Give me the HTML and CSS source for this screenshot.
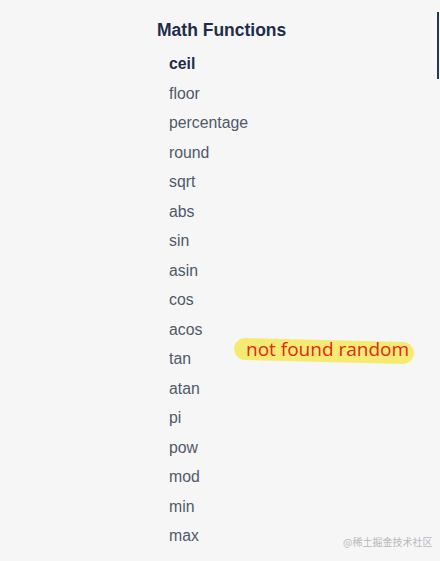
FILE: index.html
```html
<!DOCTYPE html>
<html>
<head>
<meta charset="utf-8">
<link rel="stylesheet" href="styles.css">
</head>
<body>
<div class="page">
  <div class="edge"></div>
  <nav class="sidebar">
    <h2 class="title">Math Functions</h2>
    <ul class="list">
      <li class="item active">ceil</li>
      <li class="item">floor</li>
      <li class="item">percentage</li>
      <li class="item">round</li>
      <li class="item">sqrt</li>
      <li class="item">abs</li>
      <li class="item">sin</li>
      <li class="item">asin</li>
      <li class="item">cos</li>
      <li class="item">acos</li>
      <li class="item">tan</li>
      <li class="item">atan</li>
      <li class="item">pi</li>
      <li class="item">pow</li>
      <li class="item">mod</li>
      <li class="item">min</li>
      <li class="item">max</li>
    </ul>
  </nav>
  <div class="note"><span class="mark"></span><span class="note-text">not found random</span></div>
  <div class="watermark">@稀土掘金技术社区</div>
</div>
</body>
</html>
```
FILE: styles.css
```css
html, body {
  margin: 0;
  padding: 0;
  background: #f6f6f7;
}
.page {
  position: relative;
  width: 440px;
  height: 561px;
  overflow: hidden;
  font-family: "Liberation Sans", Arial, sans-serif;
}
.sidebar {
  padding: 18px 0 0 157px;
}
.title {
  margin: 0;
  font-size: 17.5px;
  line-height: 24px;
  font-weight: bold;
  color: #1f2d4b;
}
.list {
  list-style: none;
  margin: 7px 0 0 0;
  padding: 0 0 0 12px;
}
.item {
  font-size: 15.8px;
  line-height: 29.5px;
  color: #505969;
}
.item.active {
  font-weight: bold;
  color: #1f2d4b;
}
.edge {
  position: absolute;
  left: 437px;
  top: 12px;
  width: 2px;
  height: 67px;
  background: #2a3550;
}
.note {
  position: absolute;
  left: 234px;
  top: 336px;
  width: 182px;
  height: 30px;
}
.mark {
  position: absolute;
  left: 0;
  top: 4px;
  width: 180px;
  height: 22px;
  background: rgba(246, 232, 80, 0.8);
  border-radius: 11px;
  transform: rotate(1.5deg);
}
.note-text {
  position: absolute;
  left: 12px;
  top: 0px;
  font-family: "Open Sans", sans-serif;
  font-size: 19px;
  line-height: 26px;
  color: #e0281c;
  white-space: nowrap;
}
.watermark {
  position: absolute;
  left: 343px;
  top: 535px;
  font-family: "Noto Sans CJK SC", sans-serif;
  font-size: 10px;
  line-height: 13px;
  color: #b8b8bc;
  white-space: nowrap;
}
```
